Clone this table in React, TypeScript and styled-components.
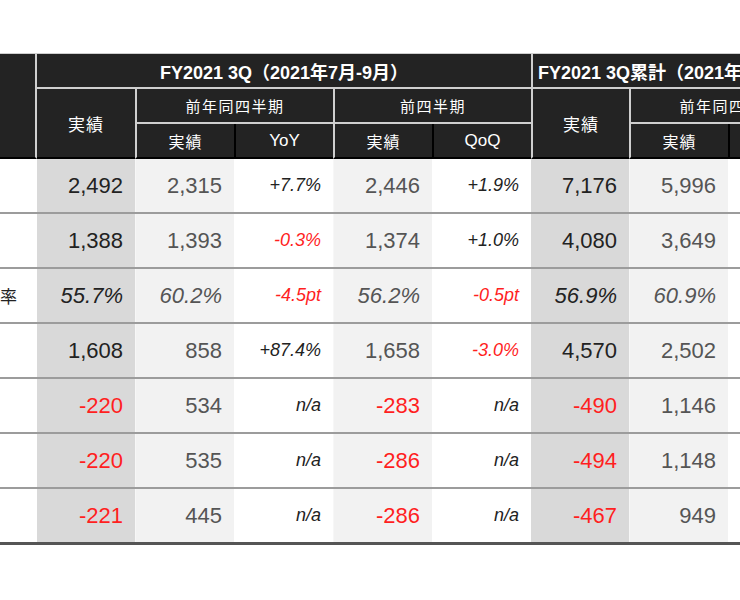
import React from 'react';
import styled, { createGlobalStyle, css } from 'styled-components';

const Global = createGlobalStyle`
  html, body { margin: 0; padding: 0; background: #ffffff; }
  body { font-family: "Liberation Sans", "Noto Sans CJK JP", sans-serif; }
`;

const COLS = '37px 98px 99px 99px 99px 99px 98px 99px 99px';
const LIGHT = '#cfcfcf';

const Viewport = styled.div`
  width: 740px;
  height: 600px;
  overflow: hidden;
  padding-top: 53px;
  box-sizing: border-box;
`;

const Table = styled.div`
  width: 827px;
  display: flex;
  flex-direction: column;
`;

const Head = styled.div`
  display: grid;
  grid-template-columns: ${COLS};
  grid-template-rows: 35px 35px 35px;
  border-top: 1px solid ${LIGHT};
  background: #232323;
`;

type Edge = 'light' | 'black' | 'none';

const edge = (e: Edge) => (e === 'light' ? `2px solid ${LIGHT}` : e === 'black' ? '2px solid #000' : 'none');

const HeadCell = styled.div<{
  $col: string;
  $row: string;
  $left?: Edge;
  $right?: Edge;
  $bottom?: Edge;
  $size?: number;
  $bold?: boolean;
  $spacing?: number;
}>`
  grid-column: ${(p) => p.$col};
  grid-row: ${(p) => p.$row};
  box-sizing: border-box;
  display: flex;
  align-items: center;
  justify-content: center;
  white-space: nowrap;
  color: #ffffff;
  font-size: ${(p) => p.$size ?? 16}px;
  font-weight: ${(p) => (p.$bold ? 700 : 400)};
  letter-spacing: ${(p) => p.$spacing ?? 0}px;
  border-left: ${(p) => edge(p.$left ?? 'none')};
  border-right: ${(p) => edge(p.$right ?? 'none')};
  border-bottom: ${(p) => edge(p.$bottom ?? 'none')};
`;

const Row = styled.div<{ $last?: boolean }>`
  display: grid;
  grid-template-columns: ${COLS};
  height: ${(p) => (p.$last ? 56 : 55)}px;
  box-sizing: border-box;
  border-bottom: ${(p) => (p.$last ? '3px solid #555555' : '2px solid #9c9c9c')};
`;

const Label = styled.div`
  display: flex;
  align-items: center;
  white-space: nowrap;
  overflow: hidden;
  font-size: 17px;
  color: #222222;
  background: #ffffff;
`;

type Kind = 'main' | 'prior' | 'change';

const BG: Record<Kind, string> = {
  main: '#d9d9d9',
  prior: '#f2f2f2',
  change: '#ffffff',
};

const Value = styled.div<{ $kind: Kind; $italic?: boolean; $red?: boolean }>`
  display: flex;
  align-items: center;
  justify-content: flex-end;
  padding-right: 12px;
  box-sizing: border-box;
  white-space: nowrap;
  background: ${(p) => BG[p.$kind]};
  border-left: 1px solid ${(p) => (p.$kind === 'prior' ? '#f7f7f7' : 'transparent')};
  ${(p) =>
    p.$kind === 'change'
      ? css`
          font-size: 18px;
          font-style: italic;
          color: ${p.$red ? '#ff1f1f' : '#222222'};
        `
      : css`
          font-size: 22px;
          font-style: ${p.$italic ? 'italic' : 'normal'};
          color: ${p.$red ? '#ff1f1f' : p.$kind === 'main' ? '#222222' : '#555555'};
        `}
`;

const KINDS: Kind[] = ['main', 'prior', 'change', 'prior', 'change', 'main', 'prior', 'change'];

const ROWS: { label: string; italic?: boolean; values: string[] }[] = [
  { label: '', values: ['2,492', '2,315', '+7.7%', '2,446', '+1.9%', '7,176', '5,996', '+19.7%'] },
  { label: '', values: ['1,388', '1,393', '-0.3%', '1,374', '+1.0%', '4,080', '3,649', '+11.8%'] },
  { label: '率', italic: true, values: ['55.7%', '60.2%', '-4.5pt', '56.2%', '-0.5pt', '56.9%', '60.9%', '-4.0pt'] },
  { label: '', values: ['1,608', '858', '+87.4%', '1,658', '-3.0%', '4,570', '2,502', '+82.7%'] },
  { label: '', values: ['-220', '534', 'n/a', '-283', 'n/a', '-490', '1,146', 'n/a'] },
  { label: '', values: ['-220', '535', 'n/a', '-286', 'n/a', '-494', '1,148', 'n/a'] },
  { label: '', values: ['-221', '445', 'n/a', '-286', 'n/a', '-467', '949', 'n/a'] },
];

export default function App() {
  return (
    <>
      <Global />
      <Viewport>
        <Table>
          <Head>
            <HeadCell $col="1" $row="1 / span 3" $right="light" $bottom="black" />
            <HeadCell $col="2 / span 5" $row="1" $bottom="light" $bold $size={18}>
              FY2021 3Q（2021年7月-9月）
            </HeadCell>
            <HeadCell $col="7 / span 3" $row="1" $left="light" $bottom="light" $bold $size={18}>
              FY2021 3Q累計（2021年1月-9月）
            </HeadCell>

            <HeadCell $col="2" $row="2 / span 2" $bottom="black" $size={17} $spacing={1}>
              実績
            </HeadCell>
            <HeadCell $col="3 / span 2" $row="2" $left="light" $bottom="light" $size={15} $spacing={1.5}>
              前年同四半期
            </HeadCell>
            <HeadCell $col="5 / span 2" $row="2" $left="light" $bottom="light" $size={15} $spacing={1.5}>
              前四半期
            </HeadCell>
            <HeadCell $col="7" $row="2 / span 2" $left="light" $bottom="black" $size={17} $spacing={1}>
              実績
            </HeadCell>
            <HeadCell $col="8 / span 2" $row="2" $left="light" $bottom="light" $size={15} $spacing={1.5}>
              前年同四半期
            </HeadCell>

            <HeadCell $col="3" $row="3" $left="light" $bottom="black" $size={16} $spacing={1}>
              実績
            </HeadCell>
            <HeadCell $col="4" $row="3" $left="black" $bottom="black" $size={17}>
              YoY
            </HeadCell>
            <HeadCell $col="5" $row="3" $left="light" $bottom="black" $size={16} $spacing={1}>
              実績
            </HeadCell>
            <HeadCell $col="6" $row="3" $left="black" $bottom="black" $size={17}>
              QoQ
            </HeadCell>
            <HeadCell $col="8" $row="3" $left="light" $bottom="black" $size={16} $spacing={1}>
              実績
            </HeadCell>
            <HeadCell $col="9" $row="3" $left="black" $bottom="black" $size={17}>
              YoY
            </HeadCell>
          </Head>

          {ROWS.map((r, i) => (
            <Row key={i} $last={i === ROWS.length - 1}>
              <Label>{r.label}</Label>
              {r.values.map((v, j) => (
                <Value key={j} $kind={KINDS[j]} $italic={r.italic} $red={v.startsWith('-')}>
                  {v}
                </Value>
              ))}
            </Row>
          ))}
        </Table>
      </Viewport>
    </>
  );
}
